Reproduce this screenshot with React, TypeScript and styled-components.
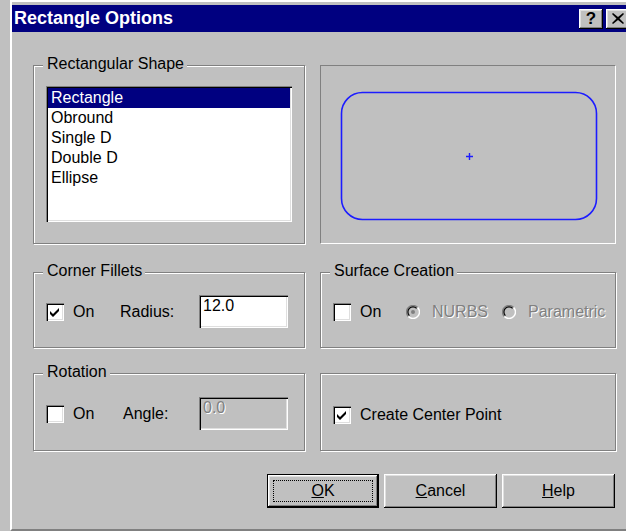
import React from "react";
import styled, { createGlobalStyle, css } from "styled-components";

const GlobalStyle = createGlobalStyle`
  html, body {
    margin: 0;
    padding: 0;
    background: #c0c0c0;
    overflow: hidden;
  }
  body {
    font-family: "Liberation Sans", Arial, sans-serif;
    font-size: 16px;
    color: #000;
  }
`;

const sunken = css`
  box-shadow: inset 1px 1px 0 #808080, inset 2px 2px 0 #000, inset -1px -1px 0 #fff,
    inset -2px -2px 0 #dfdfdf;
`;

const Window = styled.div`
  box-sizing: border-box;
  margin-left: 10px;
  width: 622px;
  height: 531px;
  padding-top: 3px;
  border-left: 2px solid #fff;
  border-top: 2px solid #fff;
  border-bottom: 2px solid #808080;
  background: #c0c0c0;
`;

const TitleBar = styled.div`
  height: 27px;
  display: flex;
  align-items: center;
  justify-content: space-between;
  padding: 0 2px 0 2px;
  background: #000080;
  color: #fff;
  font-weight: bold;
  font-size: 18px;
`;

const CaptionButtons = styled.div`
  display: flex;
  gap: 3px;
`;

const CaptionButton = styled.div`
  width: 24px;
  height: 20px;
  display: flex;
  align-items: center;
  justify-content: center;
  background: #c0c0c0;
  color: #000;
  font-size: 17px;
  font-weight: bold;
  box-shadow: inset -1px -1px 0 #000, inset 1px 1px 0 #fff, inset -2px -2px 0 #808080,
    inset 2px 2px 0 #dfdfdf;
`;

const Content = styled.div`
  padding-left: 21px;
  width: 583px;
`;

const Row = styled.div<{ $top: number; $height: number }>`
  display: grid;
  grid-template-columns: 272px 296px;
  column-gap: 15px;
  margin-top: ${(p) => p.$top}px;
  height: ${(p) => p.$height}px;
`;

const Group = styled.div<{ $padTop?: number }>`
  position: relative;
  box-sizing: border-box;
  border: 1px solid #808080;
  box-shadow: 1px 1px 0 #fff, inset 1px 1px 0 #fff;
  display: flex;
  align-items: center;
  padding: ${(p) => p.$padTop ?? 3}px 0 0 12px;
`;

const Legend = styled.span`
  position: absolute;
  top: -11px;
  left: 9px;
  padding: 0 3px 0 4px;
  line-height: 18px;
  background: #c0c0c0;
`;

const ShapeGroup = styled(Group)`
  align-items: flex-start;
  padding: 20px 12px 19px 12px;
`;

const ListBox = styled.ul`
  box-sizing: border-box;
  list-style: none;
  margin: 0;
  flex: 1;
  height: 136px;
  padding: 2px;
  background: #fff;
  ${sunken}
`;

const ListItem = styled.li<{ $selected?: boolean }>`
  height: 20px;
  line-height: 20px;
  padding-left: 3px;
  background: ${(p) => (p.$selected ? "#000080" : "transparent")};
  color: ${(p) => (p.$selected ? "#fff" : "#000")};
`;

const Preview = styled.div`
  box-sizing: border-box;
  height: 179px;
  border-top: 1px solid #808080;
  border-left: 1px solid #808080;
  border-right: 1px solid #fff;
  border-bottom: 1px solid #fff;
`;

const CheckOption = styled.label<{ $width?: number }>`
  display: flex;
  align-items: center;
  gap: 9px;
  width: ${(p) => (p.$width ? `${p.$width}px` : "auto")};
`;

const Box = styled.span`
  box-sizing: border-box;
  width: 18px;
  height: 18px;
  display: inline-flex;
  align-items: center;
  justify-content: center;
  background: #fff;
  ${sunken}
`;

const Caption = styled.span<{ $width: number; $disabled?: boolean }>`
  width: ${(p) => p.$width}px;
  ${(p) =>
    p.$disabled &&
    css`
      color: #808080;
      text-shadow: 1px 1px 0 #fff;
    `}
`;

const RadioOption = styled.label<{ $width?: number }>`
  display: flex;
  align-items: center;
  gap: 12px;
  width: ${(p) => (p.$width ? `${p.$width}px` : "auto")};
  color: #808080;
  text-shadow: 1px 1px 0 #fff;
`;

const TextBox = styled.div<{ $disabled?: boolean }>`
  box-sizing: border-box;
  width: 89px;
  height: 33px;
  padding: 2px 4px 0;
  line-height: 18px;
  background: ${(p) => (p.$disabled ? "#c0c0c0" : "#fff")};
  color: ${(p) => (p.$disabled ? "#808080" : "#000")};
  text-shadow: ${(p) => (p.$disabled ? "1px 1px 0 #fff" : "none")};
  ${sunken}
`;

const ButtonRow = styled.div`
  display: flex;
  justify-content: flex-end;
  gap: 5px;
  margin-top: 23px;
  padding-right: 1px;
`;

const Button = styled.button<{ $default?: boolean }>`
  box-sizing: border-box;
  width: ${(p) => (p.$default ? 112 : 113)}px;
  height: 34px;
  border: none;
  background: #c0c0c0;
  font-family: inherit;
  font-size: 16px;
  color: #000;
  padding: 0;
  position: relative;
  box-shadow: ${(p) =>
    p.$default
      ? "inset 0 0 0 1px #000, inset -2px -2px 0 #000, inset 2px 2px 0 #fff, inset -3px -3px 0 #808080, inset 3px 3px 0 #dfdfdf"
      : "inset -1px -1px 0 #000, inset 1px 1px 0 #fff, inset -2px -2px 0 #808080, inset 2px 2px 0 #dfdfdf"};
`;

const FocusRing = styled.span`
  position: absolute;
  inset: 6px;
  border: 1px dotted #000;
`;

const CheckMark = () => (
  <svg width="12" height="12" viewBox="0 0 12 12">
    <path d="M1 5 L4 8 L10 2 L10 5 L4 11 L1 8 Z" fill="#000" />
  </svg>
);

const Check = ({ checked }: { checked?: boolean }) => <Box>{checked && <CheckMark />}</Box>;

const Radio = ({ selected }: { selected?: boolean }) => (
  <svg width="14" height="14" viewBox="0 0 14 14">
    <path d="M11.6 2.4 A6.5 6.5 0 0 0 2.4 11.6" fill="none" stroke="#808080" strokeWidth="1.4" />
    <path d="M10.6 3.4 A5 5 0 0 0 3.4 10.6" fill="none" stroke="#000" strokeWidth="1.2" />
    <path d="M2.4 11.6 A6.5 6.5 0 0 0 11.6 2.4" fill="none" stroke="#fff" strokeWidth="1.4" />
    {selected && <circle cx="7" cy="7" r="2" fill="#808080" />}
  </svg>
);

const Hotkey = styled.span`
  text-decoration: underline;
`;

const shapes = ["Rectangle", "Obround", "Single D", "Double D", "Ellipse"];

export default function App() {
  return (
    <>
      <GlobalStyle />
      <Window>
        <TitleBar>
          <span>Rectangle Options</span>
          <CaptionButtons>
            <CaptionButton>?</CaptionButton>
            <CaptionButton>
              <svg width="12" height="11" viewBox="0 0 12 11">
                <path d="M1 0 L6 4 L11 0 L12 1 L7.5 5.5 L12 10 L11 11 L6 7 L1 11 L0 10 L4.5 5.5 L0 1 Z" fill="#000" />
              </svg>
            </CaptionButton>
          </CaptionButtons>
        </TitleBar>

        <Content>
          <Row $top={33} $height={178}>
            <ShapeGroup>
              <Legend>Rectangular Shape</Legend>
              <ListBox>
                {shapes.map((s, i) => (
                  <ListItem key={s} $selected={i === 0}>
                    {s}
                  </ListItem>
                ))}
              </ListBox>
            </ShapeGroup>
            <Preview>
              <svg width="294" height="177" viewBox="0 0 294 177">
                <rect x="20.5" y="26.5" width="255" height="127" rx="21" fill="none" stroke="#1c1cff" strokeWidth="1.6" />
                <path d="M145 90.5 H152 M148.5 87 V94" stroke="#1c1cff" strokeWidth="1.4" />
              </svg>
            </Preview>
          </Row>

          <Row $top={29} $height={76}>
            <Group>
              <Legend>Corner Fillets</Legend>
              <CheckOption $width={74}>
                <Check checked />
                On
              </CheckOption>
              <Caption $width={79}>Radius:</Caption>
              <TextBox>12.0</TextBox>
            </Group>
            <Group>
              <Legend>Surface Creation</Legend>
              <CheckOption $width={73}>
                <Check />
                On
              </CheckOption>
              <RadioOption $width={96}>
                <Radio selected />
                NURBS
              </RadioOption>
              <RadioOption>
                <Radio />
                Parametric
              </RadioOption>
            </Group>
          </Row>

          <Row $top={25} $height={78}>
            <Group>
              <Legend>Rotation</Legend>
              <CheckOption $width={77}>
                <Check />
                On
              </CheckOption>
              <Caption $width={76}>Angle:</Caption>
              <TextBox $disabled>0.0</TextBox>
            </Group>
            <Group $padTop={6}>
              <CheckOption>
                <Check checked />
                Create Center Point
              </CheckOption>
            </Group>
          </Row>

          <ButtonRow>
            <Button $default>
              <FocusRing />
              <Hotkey>O</Hotkey>K
            </Button>
            <Button>
              <Hotkey>C</Hotkey>ancel
            </Button>
            <Button>
              <Hotkey>H</Hotkey>elp
            </Button>
          </ButtonRow>
        </Content>
      </Window>
    </>
  );
}
